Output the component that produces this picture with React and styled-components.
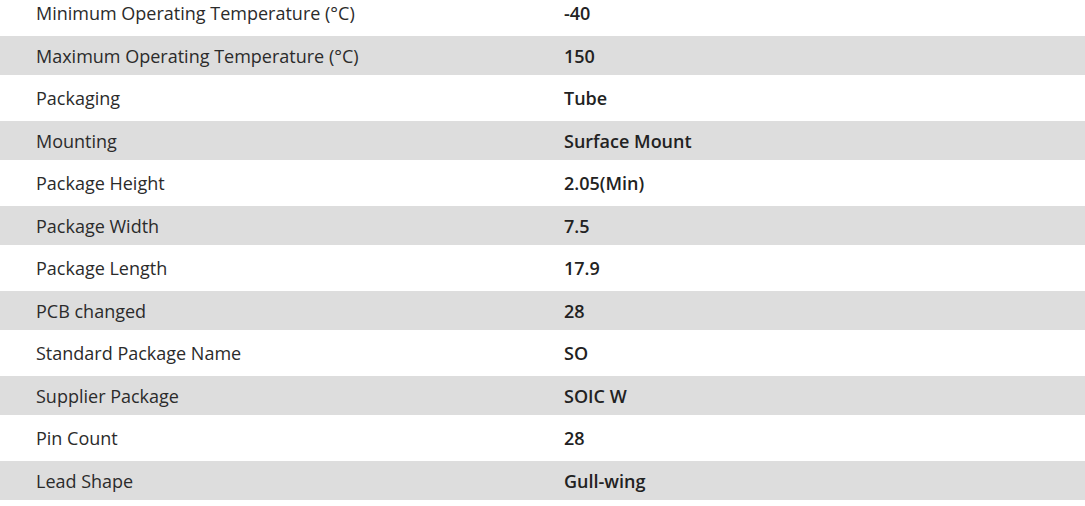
import React from "react";
import styled, { createGlobalStyle } from "styled-components";

const GlobalStyle = createGlobalStyle`
  body {
    margin: 0;
    background: #fff;
    font-family: "Open Sans", "Noto Sans", sans-serif;
    overflow: hidden;
  }
`;

const SpecList = styled.div`
  display: grid;
  grid-auto-rows: 39px;
  row-gap: 3.5px;
  margin-top: -6.5px;
  font-size: 18px;
  color: #2b2b2b;
`;

const Row = styled.div`
  display: grid;
  grid-template-columns: 528px 1fr;
  align-items: center;
  background: ${(p) => (p.$shaded ? "#dddddd" : "#ffffff")};
`;

const Label = styled.div`
  padding-left: 36px;
  font-weight: 400;
  white-space: nowrap;
`;

const Value = styled.div`
  padding-left: 36px;
  font-weight: 600;
  color: #222;
  white-space: nowrap;
`;

const specs = [
  ["Minimum Operating Temperature (°C)", "-40"],
  ["Maximum Operating Temperature (°C)", "150"],
  ["Packaging", "Tube"],
  ["Mounting", "Surface Mount"],
  ["Package Height", "2.05(Min)"],
  ["Package Width", "7.5"],
  ["Package Length", "17.9"],
  ["PCB changed", "28"],
  ["Standard Package Name", "SO"],
  ["Supplier Package", "SOIC W"],
  ["Pin Count", "28"],
  ["Lead Shape", "Gull-wing"],
];

const App = () => {
  return (
    <>
      <GlobalStyle />
      <SpecList>
        {specs.map(([label, value], i) => (
          <Row key={label} $shaded={i % 2 === 1}>
            <Label>{label}</Label>
            <Value>{value}</Value>
          </Row>
        ))}
      </SpecList>
    </>
  );
};

export default App;
